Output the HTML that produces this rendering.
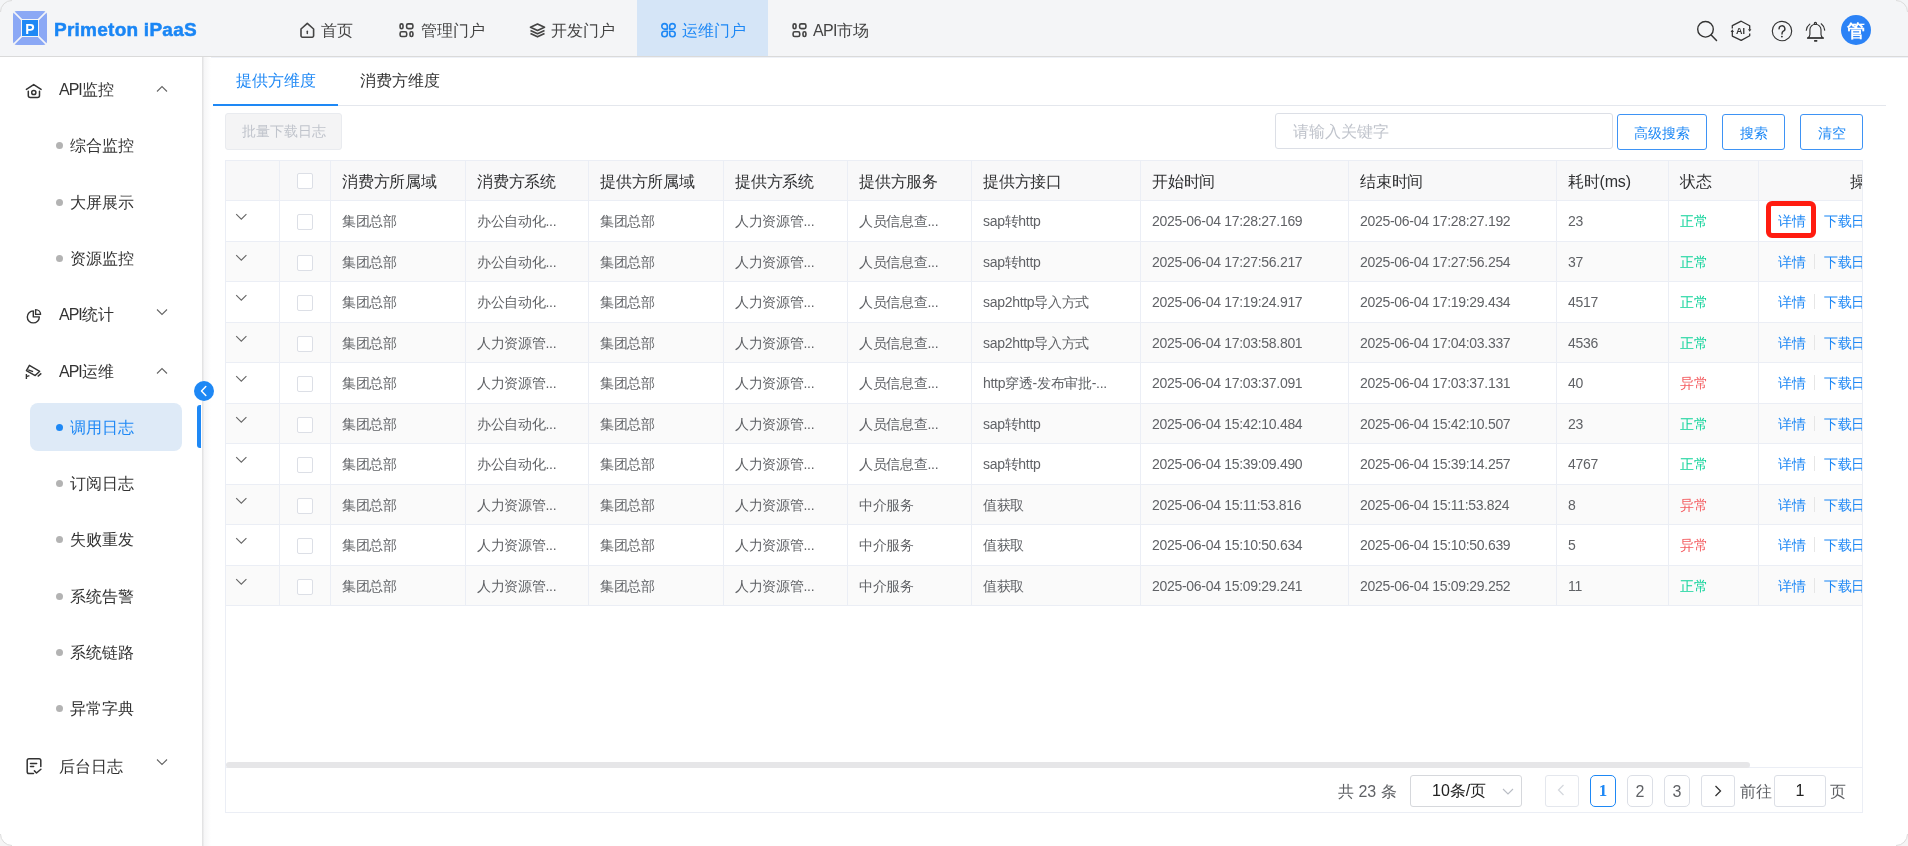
<!DOCTYPE html>
<html><head><meta charset="utf-8">
<style>
*{box-sizing:border-box;margin:0;padding:0}
html,body{width:1908px;height:846px;overflow:hidden;background:#fff;font-family:"Liberation Sans",sans-serif;color:#333}
.abs{position:absolute}
#root{position:absolute;left:0;top:0;width:1908px;height:846px;will-change:transform}
#hdr{position:absolute;left:0;top:0;width:1908px;height:57px;background:#f4f5f7;border-bottom:1px solid #dadada}
.logo-t{position:absolute;left:54px;top:18px;font-size:19px;line-height:22px;font-weight:bold;color:#1a86f5;white-space:nowrap;letter-spacing:0.25px;-webkit-text-stroke:0.5px #1a86f5}
.nav{position:absolute;top:0;height:56px;font-size:16px;color:#444;white-space:nowrap}
.nav span{position:absolute;top:21px;line-height:20px}
.nav svg{position:absolute;top:22px}
.nav.act{background:#d5e5f7;color:#1e88f5}
#side{position:absolute;left:0;top:57px;width:202px;height:789px;background:#fff}
.mi{position:absolute;left:0;width:202px;height:24px;font-size:16px;line-height:24px;color:#333;white-space:nowrap}
.mi span{position:absolute;left:59px;top:0}
.mi svg.ic{position:absolute;left:20px;top:-3px}
.mi svg.ar{position:absolute;left:155px;top:4px}
.t16{position:absolute;font-size:16px;line-height:24px;color:#333;white-space:nowrap}
.sub{position:absolute;left:0;width:202px;height:24px;line-height:24px;font-size:16px;color:#333;white-space:nowrap}
.sub .dot{position:absolute;left:56px;top:8px;width:7px;height:7px;border-radius:50%;background:#b3b3b3}
.sub span{position:absolute;left:70px;top:0}
.sub.act{color:#1e88f5}
.sub.act .dot{background:#1e88f5}
#main{position:absolute;left:202px;top:57px;width:1706px;height:789px;background:#fff}
.thbg{position:absolute;background:#f8f8f9}
.stripe{position:absolute;background:#fafafa}
.hl{position:absolute;height:1px;background:#ebeef5}
.vl{position:absolute;width:1px;background:#ebeef5}
.sbar{position:absolute;background:#e6e6e8;border-radius:3px}
.th{position:absolute;height:39px;line-height:41px;font-size:16px;color:#303133;white-space:nowrap;letter-spacing:-0.2px}
.td{position:absolute;font-size:14px;color:#606266;white-space:nowrap;letter-spacing:-0.3px}
.td.ok{color:#12d39b}
.td.bad{color:#f45d61}
.td.lk{color:#1e88f5}
.cb{position:absolute;width:16px;height:16px;border:1px solid #dcdfe6;border-radius:2px;background:#fff}
.chev{position:absolute}
.sep{position:absolute;width:1px;height:15px;background:#e6e6e6}
.btn{position:absolute;height:36px;border:1px solid #3e93f5;border-radius:3px;color:#1e88f5;font-size:14px;text-align:center;line-height:37px;white-space:nowrap;background:#fff}
.pg{position:absolute;top:775px;height:32px;border:1px solid #dcdfe6;border-radius:5px;font-size:16px;color:#606266;text-align:center;line-height:32px}

</style></head><body>
<div id="root">
<div id="hdr">
  <svg class="abs" style="left:13px;top:11px" width="34" height="34" viewBox="0 0 34 34">
    <rect x="0" y="0" width="34" height="34" rx="4" fill="#8ba8f5"/>
    <path d="M0 0L34 34M34 0L0 34" stroke="#f4f5f7" stroke-width="1.6"/>
    <rect x="8" y="8" width="18" height="18" fill="#f4f5f7"/>
    <rect x="9" y="9" width="16" height="16" fill="#1e88f5"/>
    <text x="17" y="23.2" font-size="14" font-weight="bold" fill="#fff" text-anchor="middle" font-family="Liberation Sans">P</text>
  </svg>
  <div class="logo-t" style="top:19px">Primeton iPaaS</div>
  <div class="nav" style="left:280px;width:100px">
    <svg style="left:20px" width="16" height="17" viewBox="0 0 16 17"><path d="M1 7L7.3 1.3L13.6 7V13.8A1.4 1.4 0 0 1 12.2 15.2H2.4A1.4 1.4 0 0 1 1 13.8Z" fill="none" stroke="#444" stroke-width="1.6" stroke-linejoin="round"/><path d="M7.3 9.2V11.4" stroke="#444" stroke-width="1.5" stroke-linecap="round"/></svg>
    <span style="left:41px">首页</span>
  </div>
  <div class="nav" style="left:380px;width:130px">
    <svg style="left:18px" width="16" height="16" viewBox="0 0 16 16"><g fill="none" stroke="#444" stroke-width="1.6"><rect x="2.1" y="1.9" width="2.9" height="4.7" rx="1.4"/><rect x="8.6" y="1.9" width="6.3" height="4.7" rx="1.6"/><rect x="2.1" y="9.8" width="6.6" height="4.7" rx="1.6"/><rect x="12" y="9.8" width="2.9" height="4.7" rx="1.4"/></g></svg>
    <span style="left:41px">管理门户</span>
  </div>
  <div class="nav" style="left:510px;width:127px">
    <svg style="left:19px;top:23px" width="17" height="15" viewBox="0 0 17 15"><g fill="none" stroke="#444" stroke-width="1.7" stroke-linejoin="round"><path d="M8.5 1L15.5 4.2L8.5 7.4L1.5 4.2Z"/><path d="M1.5 7.5L8.5 10.7L15.5 7.5"/><path d="M1.5 10.6L8.5 13.8L15.5 10.6"/></g></svg>
    <span style="left:41px">开发门户</span>
  </div>
  <div class="nav act" style="left:637px;width:131px">
    <svg style="left:23px" width="17" height="17" viewBox="0 0 17 17"><g fill="none" stroke="#1e88f5" stroke-width="1.6" stroke-linejoin="round"><path d="M7.3 7.1H4.55A2.75 2.75 0 1 1 7.3 4.35Z"/><path d="M9.7 7.1V4.35A2.75 2.75 0 1 1 12.45 7.1Z"/><path d="M7.3 9.3H4.55A2.75 2.75 0 1 0 7.3 12.05Z"/><path d="M9.7 9.3H12.45A2.75 2.75 0 1 1 9.7 12.05Z"/></g></svg>
    <span style="left:45px">运维门户</span>
  </div>
  <div class="nav" style="left:768px;width:120px">
    <svg style="left:23px" width="16" height="16" viewBox="0 0 16 16"><g fill="none" stroke="#444" stroke-width="1.6"><rect x="2.1" y="1.9" width="2.9" height="4.7" rx="1.4"/><rect x="8.6" y="1.9" width="6.3" height="4.7" rx="1.6"/><rect x="2.1" y="9.8" width="6.6" height="4.7" rx="1.6"/><rect x="12" y="9.8" width="2.9" height="4.7" rx="1.4"/></g></svg>
    <span style="left:45px"><i style="font-style:normal;letter-spacing:-0.7px">API</i>市场</span>
  </div>
  <!-- right icons -->
  <svg class="abs" style="left:1695px;top:19px" width="24" height="24" viewBox="0 0 24 24"><circle cx="10.5" cy="10.3" r="7.8" fill="none" stroke="#333" stroke-width="1.4"/><path d="M16.2 16L21.5 21.5" stroke="#333" stroke-width="1.5" stroke-linecap="round"/></svg>
  <svg class="abs" style="left:1728px;top:18px" width="26" height="26" viewBox="0 0 26 26"><g fill="none" stroke="#333" stroke-width="1.3" stroke-linejoin="round"><path d="M4.3 10.4V7.7L13.2 3.2L21.7 7.7V11.5"/><path d="M21.7 15.4V17.8L13.2 22.4L4.3 18.1V13.8"/></g><path d="M20 11.2H23.4L21.7 13.8Z M2.6 13.9H6L4.3 11.3Z" fill="#333"/><text x="12.6" y="15.8" font-size="9" font-weight="bold" fill="#333" text-anchor="middle" font-family="Liberation Sans">AI</text></svg>
  <svg class="abs" style="left:1770px;top:19px" width="24" height="24" viewBox="0 0 24 24"><circle cx="12" cy="12" r="9.7" fill="none" stroke="#333" stroke-width="1.15"/><path d="M9.1 9.9A2.9 2.9 0 1 1 13 12.4C12.3 12.9 12 13.4 12 15" fill="none" stroke="#333" stroke-width="1.4" stroke-linecap="round"/><circle cx="11.9" cy="17.6" r="0.95" fill="#333"/></svg>
  <svg class="abs" style="left:1802px;top:18px" width="28" height="28" viewBox="0 0 28 28"><g fill="none" stroke="#333" stroke-width="1.15" stroke-linecap="round" stroke-linejoin="round"><circle cx="13.4" cy="5.4" r="1.1"/><path d="M5.6 19.9C6.8 19.2 7.9 18.3 7.9 16.4V11.8A5.55 5.55 0 0 1 19 11.8V16.4C19 18.3 20.1 19.2 21.3 19.9Z"/><path d="M7.8 6.1A9 9 0 0 0 4.3 12.3M19.2 5.8A9 9 0 0 1 22.7 12.1"/></g><path d="M5.6 20.1H21.3" stroke="#333" stroke-width="1.4" stroke-linecap="round"/><rect x="12" y="22" width="3.4" height="1.7" rx="0.6" fill="#333"/></svg>
  <div class="abs" style="left:1841px;top:15px;width:30px;height:30px;border-radius:50%;background:#2b82f6;color:#fff;font-size:18px;font-weight:bold;line-height:32px;text-align:center">管</div>
</div>

<div id="side"></div>
<svg class="abs" style="left:20px;top:76px" width="30" height="30" viewBox="0 0 30 30"><g fill="none" stroke="#333" stroke-width="1.5" stroke-linecap="round" stroke-linejoin="round"><path d="M6.4 13.4L13.7 8.6L21.1 13.4"/><path d="M8.3 15.2V19.5A2 2 0 0 0 10.3 21.5H17.5A2 2 0 0 0 19.5 19.5V15.2"/><circle cx="13.8" cy="16.5" r="2.1"/></g></svg>
<div class="t16" style="left:59px;top:78px"><span style="letter-spacing:-1px">API</span>监控</div><svg class="abs" style="left:155px;top:85px" width="14" height="8" viewBox="0 0 14 8"><path d="M2 6.5L7 1.5L12 6.5" fill="none" stroke="#666" stroke-width="1.1"/></svg><div class="sub" style="top:134.2px"><i class="dot"></i><span>综合监控</span></div><div class="sub" style="top:190.5px"><i class="dot"></i><span>大屏展示</span></div><div class="sub" style="top:246.5px"><i class="dot"></i><span>资源监控</span></div>
<svg class="abs" style="left:20px;top:300px" width="30" height="30" viewBox="0 0 30 30"><g fill="none" stroke="#333" stroke-width="1.4" stroke-linejoin="round"><path d="M13.3 10.9A6 6 0 1 0 19.3 16.9H13.3Z"/><path d="M15.6 9.6A5 5 0 0 1 20.6 14.4H15.6Z"/></g></svg>
<div class="t16" style="left:59px;top:303px"><span style="letter-spacing:-1px">API</span>统计</div><svg class="abs" style="left:155px;top:308px" width="14" height="8" viewBox="0 0 14 8"><path d="M2 1.5L7 6.5L12 1.5" fill="none" stroke="#666" stroke-width="1.1"/></svg>
<svg class="abs" style="left:20px;top:355px" width="30" height="30" viewBox="0 0 30 30"><g fill="none" stroke="#333" stroke-width="1.4" stroke-linejoin="round"><path d="M9.4 10.3L19.7 16.3L15.2 20.6L6.4 15.6Z"/><path d="M8.2 14.9L13.1 16.7"/><path d="M17.7 21.5L21.3 18.4"/><path d="M6.4 19.1V24.1M6.4 21.6L9.4 20.6"/></g></svg>
<div class="t16" style="left:59px;top:360px"><span style="letter-spacing:-1px">API</span>运维</div><svg class="abs" style="left:155px;top:367px" width="14" height="8" viewBox="0 0 14 8"><path d="M2 6.5L7 1.5L12 6.5" fill="none" stroke="#666" stroke-width="1.1"/></svg>
<div class="abs" style="left:30px;top:403px;width:152px;height:48px;border-radius:8px;background:#deeaf7"></div>
<div class="abs" style="left:197px;top:405px;width:4px;height:43px;border-radius:3px 0 0 3px;background:#1e88f5"></div>
<div class="sub act" style="top:415.5px"><i class="dot"></i><span>调用日志</span></div><div class="sub" style="top:471.5px"><i class="dot"></i><span>订阅日志</span></div><div class="sub" style="top:528.2px"><i class="dot"></i><span>失败重发</span></div><div class="sub" style="top:584.5px"><i class="dot"></i><span>系统告警</span></div><div class="sub" style="top:640.6px"><i class="dot"></i><span>系统链路</span></div><div class="sub" style="top:697px"><i class="dot"></i><span>异常字典</span></div>
<svg class="abs" style="left:20px;top:750px" width="30" height="30" viewBox="0 0 30 30"><g fill="none" stroke="#333" stroke-width="1.5" stroke-linecap="round" stroke-linejoin="round"><path d="M13.5 23.5H9A1.8 1.8 0 0 1 7.2 21.7V10.5A1.8 1.8 0 0 1 9 8.7H19A1.8 1.8 0 0 1 20.8 10.5V16.5"/><path d="M10.5 13.5H16.6"/><path d="M10.5 16.6H13.6"/><path d="M14.4 20.9L16.5 23L20.9 19.2"/></g></svg>
<div class="t16" style="left:59px;top:755px">后台日志</div><svg class="abs" style="left:155px;top:758px" width="14" height="8" viewBox="0 0 14 8"><path d="M2 1.5L7 6.5L12 1.5" fill="none" stroke="#666" stroke-width="1.1"/></svg>
<div class="abs" style="left:202px;top:57px;width:9px;height:789px;z-index:2;background:linear-gradient(to right,#e3e3e4 0,#e3e3e4 1px,#f6f6f7 2px,#fff 9px)"></div>
<div class="abs" style="left:194px;top:381px;width:20px;height:20px;border-radius:50%;background:#1e88f5;z-index:5"><svg width="20" height="20" viewBox="0 0 20 20"><path d="M11.8 5.5L7.5 10L11.8 14.5" fill="none" stroke="#fff" stroke-width="1.5" stroke-linecap="round" stroke-linejoin="round"/></svg></div>
<div id="main">
</div>
<div class="abs" style="left:202px;top:57px;width:1706px;height:1px;background:#eef1f7"></div>
<div class="abs" style="left:213px;top:105px;width:1673px;height:1px;background:#e4e7ed"></div>
<div class="abs" style="left:213px;top:104px;width:125px;height:2px;background:#1e88f5"></div>
<div class="abs" style="left:236px;top:71px;font-size:16px;line-height:20px;color:#1e88f5;white-space:nowrap">提供方维度</div>
<div class="abs" style="left:360px;top:71px;font-size:16px;line-height:20px;color:#333;white-space:nowrap">消费方维度</div>
<div class="abs" style="left:225px;top:113px;width:117px;height:37px;border:1px solid #e9ebef;border-radius:3px;background:#f4f4f5;color:#c0c4cc;font-size:14px;line-height:35px;text-align:center;white-space:nowrap">批量下载日志</div>
<div class="abs" style="left:1275px;top:113px;width:338px;height:36px;border:1px solid #dcdfe6;border-radius:3px;background:#fff;color:#c0c4cc;font-size:16px;line-height:36px;padding-left:17px;white-space:nowrap">请输入关键字</div>
<div class="btn" style="left:1617px;top:114px;width:90px">高级搜索</div>
<div class="btn" style="left:1722px;top:114px;width:63px">搜索</div>
<div class="btn" style="left:1800px;top:114px;width:63px">清空</div>
<div class="thbg" style="left:226px;top:161px;width:1636px;height:39px"></div>
<div class="stripe" style="left:226px;top:242px;width:1636px;height:39px"></div>
<div class="stripe" style="left:226px;top:323px;width:1636px;height:39px"></div>
<div class="stripe" style="left:226px;top:404px;width:1636px;height:39px"></div>
<div class="stripe" style="left:226px;top:485px;width:1636px;height:39px"></div>
<div class="stripe" style="left:226px;top:566px;width:1636px;height:39px"></div>
<div class="hl" style="left:225px;top:160px;width:1638px"></div>
<div class="hl" style="left:225px;top:200px;width:1638px"></div>
<div class="hl" style="left:225px;top:241px;width:1638px"></div>
<div class="hl" style="left:225px;top:281px;width:1638px"></div>
<div class="hl" style="left:225px;top:322px;width:1638px"></div>
<div class="hl" style="left:225px;top:362px;width:1638px"></div>
<div class="hl" style="left:225px;top:403px;width:1638px"></div>
<div class="hl" style="left:225px;top:443px;width:1638px"></div>
<div class="hl" style="left:225px;top:484px;width:1638px"></div>
<div class="hl" style="left:225px;top:524px;width:1638px"></div>
<div class="hl" style="left:225px;top:565px;width:1638px"></div>
<div class="hl" style="left:225px;top:605px;width:1638px"></div>
<div class="vl" style="left:225px;top:160px;height:446px"></div>
<div class="vl" style="left:279px;top:160px;height:446px"></div>
<div class="vl" style="left:330px;top:160px;height:446px"></div>
<div class="vl" style="left:465px;top:160px;height:446px"></div>
<div class="vl" style="left:588px;top:160px;height:446px"></div>
<div class="vl" style="left:723px;top:160px;height:446px"></div>
<div class="vl" style="left:847px;top:160px;height:446px"></div>
<div class="vl" style="left:971px;top:160px;height:446px"></div>
<div class="vl" style="left:1140px;top:160px;height:446px"></div>
<div class="vl" style="left:1348px;top:160px;height:446px"></div>
<div class="vl" style="left:1556px;top:160px;height:446px"></div>
<div class="vl" style="left:1668px;top:160px;height:446px"></div>
<div class="vl" style="left:1758px;top:160px;height:446px"></div>
<div class="vl" style="left:1862px;top:160px;height:446px"></div>
<div class="vl" style="left:225px;top:605px;height:208px"></div>
<div class="vl" style="left:1862px;top:605px;height:208px"></div>
<div class="hl" style="left:225px;top:767px;width:1638px"></div>
<div class="hl" style="left:225px;top:812px;width:1638px"></div>
<div class="sbar" style="left:226px;top:762px;width:1524px;height:6px"></div>
<div class="th" style="left:342px;top:161px">消费方所属域</div>
<div class="th" style="left:477px;top:161px">消费方系统</div>
<div class="th" style="left:600px;top:161px">提供方所属域</div>
<div class="th" style="left:735px;top:161px">提供方系统</div>
<div class="th" style="left:859px;top:161px">提供方服务</div>
<div class="th" style="left:983px;top:161px">提供方接口</div>
<div class="th" style="left:1152px;top:161px">开始时间</div>
<div class="th" style="left:1360px;top:161px">结束时间</div>
<div class="th" style="left:1568px;top:161px">耗时(ms)</div>
<div class="th" style="left:1680px;top:161px">状态</div>
<div class="th" style="left:1850px;top:161px;width:12px;overflow:hidden">操作</div>
<div class="cb" style="left:297px;top:173px"></div>
<svg class="chev" style="left:235px;top:213px" width="13" height="8" viewBox="0 0 13 8"><path d="M1.2 1.2L6.3 6.2L11.4 1.2" fill="none" stroke="#666" stroke-width="1.1"/></svg>
<div class="cb" style="left:297px;top:214px"></div>
<div class="td" style="left:342px;top:200px;height:41px;line-height:43px">集团总部</div>
<div class="td" style="left:477px;top:200px;height:41px;line-height:43px">办公自动化...</div>
<div class="td" style="left:600px;top:200px;height:41px;line-height:43px">集团总部</div>
<div class="td" style="left:735px;top:200px;height:41px;line-height:43px">人力资源管...</div>
<div class="td" style="left:859px;top:200px;height:41px;line-height:43px">人员信息查...</div>
<div class="td" style="left:983px;top:200px;height:41px;line-height:43px">sap转http</div>
<div class="td dt" style="left:1152px;top:200px;height:41px;line-height:43px">2025-06-04 17:28:27.169</div>
<div class="td dt" style="left:1360px;top:200px;height:41px;line-height:43px">2025-06-04 17:28:27.192</div>
<div class="td" style="left:1568px;top:200px;height:41px;line-height:43px">23</div>
<div class="td ok" style="left:1680px;top:200px;height:41px;line-height:43px">正常</div>
<div class="td lk" style="left:1778px;top:200px;height:41px;line-height:43px">详情</div>
<div class="sep" style="left:1814px;top:213px"></div>
<div class="td lk" style="left:1824px;top:200px;height:41px;line-height:43px;width:38px;overflow:hidden">下载日志</div>
<svg class="chev" style="left:235px;top:254px" width="13" height="8" viewBox="0 0 13 8"><path d="M1.2 1.2L6.3 6.2L11.4 1.2" fill="none" stroke="#666" stroke-width="1.1"/></svg>
<div class="cb" style="left:297px;top:255px"></div>
<div class="td" style="left:342px;top:241px;height:40px;line-height:42px">集团总部</div>
<div class="td" style="left:477px;top:241px;height:40px;line-height:42px">办公自动化...</div>
<div class="td" style="left:600px;top:241px;height:40px;line-height:42px">集团总部</div>
<div class="td" style="left:735px;top:241px;height:40px;line-height:42px">人力资源管...</div>
<div class="td" style="left:859px;top:241px;height:40px;line-height:42px">人员信息查...</div>
<div class="td" style="left:983px;top:241px;height:40px;line-height:42px">sap转http</div>
<div class="td dt" style="left:1152px;top:241px;height:40px;line-height:42px">2025-06-04 17:27:56.217</div>
<div class="td dt" style="left:1360px;top:241px;height:40px;line-height:42px">2025-06-04 17:27:56.254</div>
<div class="td" style="left:1568px;top:241px;height:40px;line-height:42px">37</div>
<div class="td ok" style="left:1680px;top:241px;height:40px;line-height:42px">正常</div>
<div class="td lk" style="left:1778px;top:241px;height:40px;line-height:42px">详情</div>
<div class="sep" style="left:1814px;top:254px"></div>
<div class="td lk" style="left:1824px;top:241px;height:40px;line-height:42px;width:38px;overflow:hidden">下载日志</div>
<svg class="chev" style="left:235px;top:294px" width="13" height="8" viewBox="0 0 13 8"><path d="M1.2 1.2L6.3 6.2L11.4 1.2" fill="none" stroke="#666" stroke-width="1.1"/></svg>
<div class="cb" style="left:297px;top:295px"></div>
<div class="td" style="left:342px;top:281px;height:41px;line-height:43px">集团总部</div>
<div class="td" style="left:477px;top:281px;height:41px;line-height:43px">办公自动化...</div>
<div class="td" style="left:600px;top:281px;height:41px;line-height:43px">集团总部</div>
<div class="td" style="left:735px;top:281px;height:41px;line-height:43px">人力资源管...</div>
<div class="td" style="left:859px;top:281px;height:41px;line-height:43px">人员信息查...</div>
<div class="td" style="left:983px;top:281px;height:41px;line-height:43px">sap2http导入方式</div>
<div class="td dt" style="left:1152px;top:281px;height:41px;line-height:43px">2025-06-04 17:19:24.917</div>
<div class="td dt" style="left:1360px;top:281px;height:41px;line-height:43px">2025-06-04 17:19:29.434</div>
<div class="td" style="left:1568px;top:281px;height:41px;line-height:43px">4517</div>
<div class="td ok" style="left:1680px;top:281px;height:41px;line-height:43px">正常</div>
<div class="td lk" style="left:1778px;top:281px;height:41px;line-height:43px">详情</div>
<div class="sep" style="left:1814px;top:294px"></div>
<div class="td lk" style="left:1824px;top:281px;height:41px;line-height:43px;width:38px;overflow:hidden">下载日志</div>
<svg class="chev" style="left:235px;top:335px" width="13" height="8" viewBox="0 0 13 8"><path d="M1.2 1.2L6.3 6.2L11.4 1.2" fill="none" stroke="#666" stroke-width="1.1"/></svg>
<div class="cb" style="left:297px;top:336px"></div>
<div class="td" style="left:342px;top:322px;height:40px;line-height:42px">集团总部</div>
<div class="td" style="left:477px;top:322px;height:40px;line-height:42px">人力资源管...</div>
<div class="td" style="left:600px;top:322px;height:40px;line-height:42px">集团总部</div>
<div class="td" style="left:735px;top:322px;height:40px;line-height:42px">人力资源管...</div>
<div class="td" style="left:859px;top:322px;height:40px;line-height:42px">人员信息查...</div>
<div class="td" style="left:983px;top:322px;height:40px;line-height:42px">sap2http导入方式</div>
<div class="td dt" style="left:1152px;top:322px;height:40px;line-height:42px">2025-06-04 17:03:58.801</div>
<div class="td dt" style="left:1360px;top:322px;height:40px;line-height:42px">2025-06-04 17:04:03.337</div>
<div class="td" style="left:1568px;top:322px;height:40px;line-height:42px">4536</div>
<div class="td ok" style="left:1680px;top:322px;height:40px;line-height:42px">正常</div>
<div class="td lk" style="left:1778px;top:322px;height:40px;line-height:42px">详情</div>
<div class="sep" style="left:1814px;top:335px"></div>
<div class="td lk" style="left:1824px;top:322px;height:40px;line-height:42px;width:38px;overflow:hidden">下载日志</div>
<svg class="chev" style="left:235px;top:375px" width="13" height="8" viewBox="0 0 13 8"><path d="M1.2 1.2L6.3 6.2L11.4 1.2" fill="none" stroke="#666" stroke-width="1.1"/></svg>
<div class="cb" style="left:297px;top:376px"></div>
<div class="td" style="left:342px;top:362px;height:41px;line-height:43px">集团总部</div>
<div class="td" style="left:477px;top:362px;height:41px;line-height:43px">人力资源管...</div>
<div class="td" style="left:600px;top:362px;height:41px;line-height:43px">集团总部</div>
<div class="td" style="left:735px;top:362px;height:41px;line-height:43px">人力资源管...</div>
<div class="td" style="left:859px;top:362px;height:41px;line-height:43px">人员信息查...</div>
<div class="td" style="left:983px;top:362px;height:41px;line-height:43px">http穿透-发布审批-...</div>
<div class="td dt" style="left:1152px;top:362px;height:41px;line-height:43px">2025-06-04 17:03:37.091</div>
<div class="td dt" style="left:1360px;top:362px;height:41px;line-height:43px">2025-06-04 17:03:37.131</div>
<div class="td" style="left:1568px;top:362px;height:41px;line-height:43px">40</div>
<div class="td bad" style="left:1680px;top:362px;height:41px;line-height:43px">异常</div>
<div class="td lk" style="left:1778px;top:362px;height:41px;line-height:43px">详情</div>
<div class="sep" style="left:1814px;top:375px"></div>
<div class="td lk" style="left:1824px;top:362px;height:41px;line-height:43px;width:38px;overflow:hidden">下载日志</div>
<svg class="chev" style="left:235px;top:416px" width="13" height="8" viewBox="0 0 13 8"><path d="M1.2 1.2L6.3 6.2L11.4 1.2" fill="none" stroke="#666" stroke-width="1.1"/></svg>
<div class="cb" style="left:297px;top:417px"></div>
<div class="td" style="left:342px;top:403px;height:40px;line-height:42px">集团总部</div>
<div class="td" style="left:477px;top:403px;height:40px;line-height:42px">办公自动化...</div>
<div class="td" style="left:600px;top:403px;height:40px;line-height:42px">集团总部</div>
<div class="td" style="left:735px;top:403px;height:40px;line-height:42px">人力资源管...</div>
<div class="td" style="left:859px;top:403px;height:40px;line-height:42px">人员信息查...</div>
<div class="td" style="left:983px;top:403px;height:40px;line-height:42px">sap转http</div>
<div class="td dt" style="left:1152px;top:403px;height:40px;line-height:42px">2025-06-04 15:42:10.484</div>
<div class="td dt" style="left:1360px;top:403px;height:40px;line-height:42px">2025-06-04 15:42:10.507</div>
<div class="td" style="left:1568px;top:403px;height:40px;line-height:42px">23</div>
<div class="td ok" style="left:1680px;top:403px;height:40px;line-height:42px">正常</div>
<div class="td lk" style="left:1778px;top:403px;height:40px;line-height:42px">详情</div>
<div class="sep" style="left:1814px;top:416px"></div>
<div class="td lk" style="left:1824px;top:403px;height:40px;line-height:42px;width:38px;overflow:hidden">下载日志</div>
<svg class="chev" style="left:235px;top:456px" width="13" height="8" viewBox="0 0 13 8"><path d="M1.2 1.2L6.3 6.2L11.4 1.2" fill="none" stroke="#666" stroke-width="1.1"/></svg>
<div class="cb" style="left:297px;top:457px"></div>
<div class="td" style="left:342px;top:443px;height:41px;line-height:43px">集团总部</div>
<div class="td" style="left:477px;top:443px;height:41px;line-height:43px">办公自动化...</div>
<div class="td" style="left:600px;top:443px;height:41px;line-height:43px">集团总部</div>
<div class="td" style="left:735px;top:443px;height:41px;line-height:43px">人力资源管...</div>
<div class="td" style="left:859px;top:443px;height:41px;line-height:43px">人员信息查...</div>
<div class="td" style="left:983px;top:443px;height:41px;line-height:43px">sap转http</div>
<div class="td dt" style="left:1152px;top:443px;height:41px;line-height:43px">2025-06-04 15:39:09.490</div>
<div class="td dt" style="left:1360px;top:443px;height:41px;line-height:43px">2025-06-04 15:39:14.257</div>
<div class="td" style="left:1568px;top:443px;height:41px;line-height:43px">4767</div>
<div class="td ok" style="left:1680px;top:443px;height:41px;line-height:43px">正常</div>
<div class="td lk" style="left:1778px;top:443px;height:41px;line-height:43px">详情</div>
<div class="sep" style="left:1814px;top:456px"></div>
<div class="td lk" style="left:1824px;top:443px;height:41px;line-height:43px;width:38px;overflow:hidden">下载日志</div>
<svg class="chev" style="left:235px;top:497px" width="13" height="8" viewBox="0 0 13 8"><path d="M1.2 1.2L6.3 6.2L11.4 1.2" fill="none" stroke="#666" stroke-width="1.1"/></svg>
<div class="cb" style="left:297px;top:498px"></div>
<div class="td" style="left:342px;top:484px;height:40px;line-height:42px">集团总部</div>
<div class="td" style="left:477px;top:484px;height:40px;line-height:42px">人力资源管...</div>
<div class="td" style="left:600px;top:484px;height:40px;line-height:42px">集团总部</div>
<div class="td" style="left:735px;top:484px;height:40px;line-height:42px">人力资源管...</div>
<div class="td" style="left:859px;top:484px;height:40px;line-height:42px">中介服务</div>
<div class="td" style="left:983px;top:484px;height:40px;line-height:42px">值获取</div>
<div class="td dt" style="left:1152px;top:484px;height:40px;line-height:42px">2025-06-04 15:11:53.816</div>
<div class="td dt" style="left:1360px;top:484px;height:40px;line-height:42px">2025-06-04 15:11:53.824</div>
<div class="td" style="left:1568px;top:484px;height:40px;line-height:42px">8</div>
<div class="td bad" style="left:1680px;top:484px;height:40px;line-height:42px">异常</div>
<div class="td lk" style="left:1778px;top:484px;height:40px;line-height:42px">详情</div>
<div class="sep" style="left:1814px;top:497px"></div>
<div class="td lk" style="left:1824px;top:484px;height:40px;line-height:42px;width:38px;overflow:hidden">下载日志</div>
<svg class="chev" style="left:235px;top:537px" width="13" height="8" viewBox="0 0 13 8"><path d="M1.2 1.2L6.3 6.2L11.4 1.2" fill="none" stroke="#666" stroke-width="1.1"/></svg>
<div class="cb" style="left:297px;top:538px"></div>
<div class="td" style="left:342px;top:524px;height:41px;line-height:43px">集团总部</div>
<div class="td" style="left:477px;top:524px;height:41px;line-height:43px">人力资源管...</div>
<div class="td" style="left:600px;top:524px;height:41px;line-height:43px">集团总部</div>
<div class="td" style="left:735px;top:524px;height:41px;line-height:43px">人力资源管...</div>
<div class="td" style="left:859px;top:524px;height:41px;line-height:43px">中介服务</div>
<div class="td" style="left:983px;top:524px;height:41px;line-height:43px">值获取</div>
<div class="td dt" style="left:1152px;top:524px;height:41px;line-height:43px">2025-06-04 15:10:50.634</div>
<div class="td dt" style="left:1360px;top:524px;height:41px;line-height:43px">2025-06-04 15:10:50.639</div>
<div class="td" style="left:1568px;top:524px;height:41px;line-height:43px">5</div>
<div class="td bad" style="left:1680px;top:524px;height:41px;line-height:43px">异常</div>
<div class="td lk" style="left:1778px;top:524px;height:41px;line-height:43px">详情</div>
<div class="sep" style="left:1814px;top:537px"></div>
<div class="td lk" style="left:1824px;top:524px;height:41px;line-height:43px;width:38px;overflow:hidden">下载日志</div>
<svg class="chev" style="left:235px;top:578px" width="13" height="8" viewBox="0 0 13 8"><path d="M1.2 1.2L6.3 6.2L11.4 1.2" fill="none" stroke="#666" stroke-width="1.1"/></svg>
<div class="cb" style="left:297px;top:579px"></div>
<div class="td" style="left:342px;top:565px;height:40px;line-height:42px">集团总部</div>
<div class="td" style="left:477px;top:565px;height:40px;line-height:42px">人力资源管...</div>
<div class="td" style="left:600px;top:565px;height:40px;line-height:42px">集团总部</div>
<div class="td" style="left:735px;top:565px;height:40px;line-height:42px">人力资源管...</div>
<div class="td" style="left:859px;top:565px;height:40px;line-height:42px">中介服务</div>
<div class="td" style="left:983px;top:565px;height:40px;line-height:42px">值获取</div>
<div class="td dt" style="left:1152px;top:565px;height:40px;line-height:42px">2025-06-04 15:09:29.241</div>
<div class="td dt" style="left:1360px;top:565px;height:40px;line-height:42px">2025-06-04 15:09:29.252</div>
<div class="td" style="left:1568px;top:565px;height:40px;line-height:42px">11</div>
<div class="td ok" style="left:1680px;top:565px;height:40px;line-height:42px">正常</div>
<div class="td lk" style="left:1778px;top:565px;height:40px;line-height:42px">详情</div>
<div class="sep" style="left:1814px;top:578px"></div>
<div class="td lk" style="left:1824px;top:565px;height:40px;line-height:42px;width:38px;overflow:hidden">下载日志</div>
<div class="abs" style="left:1338px;top:782px;font-size:16px;line-height:20px;color:#606266;white-space:nowrap">共 23 条</div>
<div class="abs" style="left:1410px;top:775px;width:112px;height:32px;border:1px solid #d6d8dc;border-radius:3px;background:#fff;font-size:16px;line-height:30px;color:#222;padding-left:21px;white-space:nowrap">10条/页<svg style="position:absolute;left:91px;top:12px" width="12" height="7" viewBox="0 0 12 7"><path d="M1 1L6 6L11 1" fill="none" stroke="#b8bcc4" stroke-width="1.1"/></svg></div>
<div class="pg" style="left:1545px;width:34px;border-color:#e4e7ed;border-radius:3px"><svg style="position:absolute;left:11px;top:8px" width="8" height="12" viewBox="0 0 8 12"><path d="M6.5 1L1.5 6L6.5 11" fill="none" stroke="#d5d8de" stroke-width="1.3"/></svg></div>
<div class="pg" style="left:1590px;width:26px;border-color:#1e88f5;color:#1e88f5;font-weight:bold;font-family:'Liberation Serif',serif;font-size:17px;line-height:30px">1</div>
<div class="pg" style="left:1627px;width:26px">2</div>
<div class="pg" style="left:1664px;width:26px">3</div>
<div class="pg" style="left:1701px;width:34px;border-radius:3px"><svg style="position:absolute;left:12px;top:9px" width="8" height="12" viewBox="0 0 8 12"><path d="M1.5 1L6.5 6L1.5 11" fill="none" stroke="#333" stroke-width="1.3"/></svg></div>
<div class="abs" style="left:1740px;top:782px;font-size:16px;line-height:20px;color:#606266;white-space:nowrap">前往</div>
<div class="abs" style="left:1774px;top:775px;width:52px;height:32px;border:1px solid #dcdfe6;border-radius:3px;background:#fff;font-size:16px;line-height:30px;color:#222;text-align:center">1</div>
<div class="abs" style="left:1830px;top:782px;font-size:16px;line-height:20px;color:#606266;white-space:nowrap">页</div>
<div class="abs" style="left:1766px;top:201px;width:50px;height:37px;border:5px solid #ff1c10;border-radius:6px;z-index:3"></div>


<div class="abs" style="left:0;top:0;width:12px;height:12px;overflow:hidden;background:#f4f5f7;z-index:9"><div style="position:absolute;left:0;top:0;width:24px;height:24px;border-radius:12px;border:1px solid #dcdcdc;background:#f4f5f7"></div></div>
<div class="abs" style="left:1896px;top:0;width:12px;height:12px;overflow:hidden;background:#f4f5f7;z-index:9"><div style="position:absolute;left:-12px;top:0;width:24px;height:24px;border-radius:12px;border:1px solid #dcdcdc;background:#f4f5f7"></div></div>
<div class="abs" style="left:0;top:834px;width:12px;height:12px;overflow:hidden;background:#f5f5f5;z-index:9"><div style="position:absolute;left:0;top:-12px;width:24px;height:24px;border-radius:12px;border:1px solid #dcdcdc;background:#fff"></div></div>
<div class="abs" style="left:1896px;top:834px;width:12px;height:12px;overflow:hidden;background:#f5f5f5;z-index:9"><div style="position:absolute;left:-12px;top:-12px;width:24px;height:24px;border-radius:12px;border:1px solid #dcdcdc;background:#fff"></div></div>

</div>
</body></html>
